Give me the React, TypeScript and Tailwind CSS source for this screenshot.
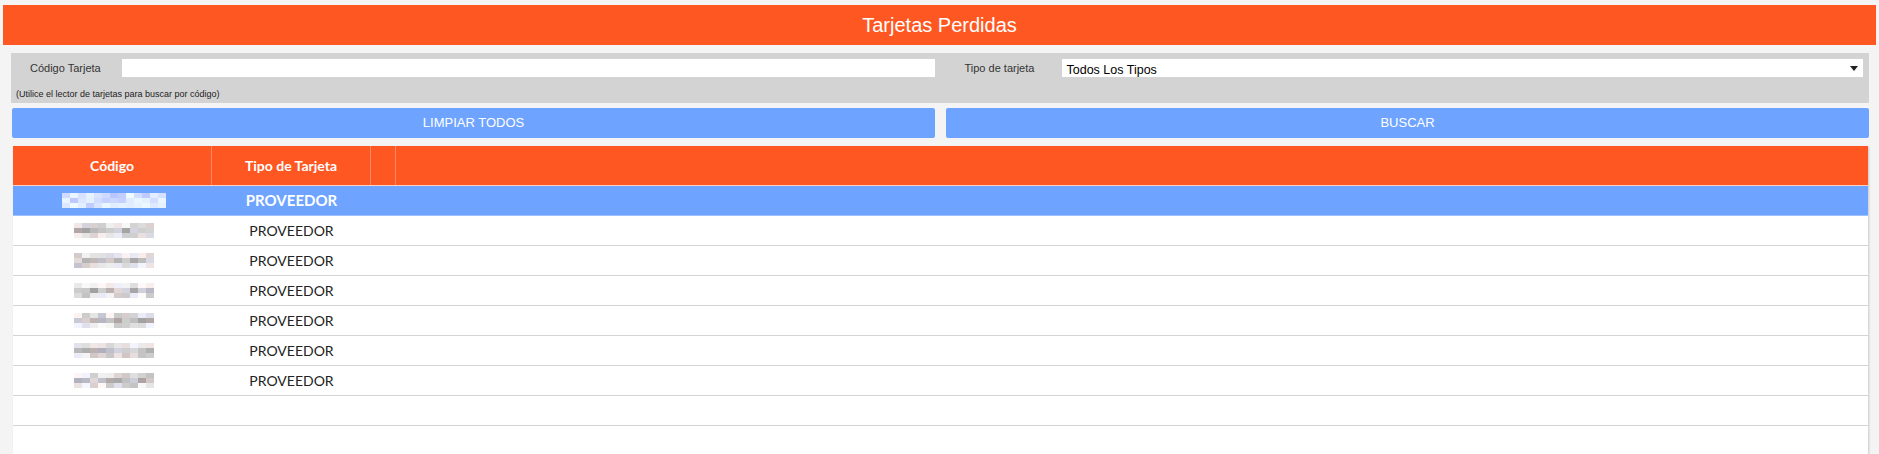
import React from "react";

const ORANGE = "bg-[#ff5722]";

function rand(seed: number) {
  let s = seed;
  return () => {
    s = (s * 9301 + 49297) % 233280;
    return s / 233280;
  };
}

function Mosaic({ seed, selected, width }: { seed: number; selected?: boolean; width: number }) {
  const r = rand(seed);
  const cols = Math.round(width / 8);
  const rows = 3;
  const rects: React.ReactNode[] = [];
  for (let y = 0; y < rows; y++) {
    for (let x = 0; x < cols; x++) {
      const v = r();
      let fill: string;
      if (selected) {
        const l = Math.round(200 + v * 55);
        fill = `rgb(${Math.min(255, l - 15)},${Math.min(255, l - 3)},255)`;
      } else {
        const base = y === 1 ? 160 : 195;
        const l = Math.round(base + v * (y === 1 ? 60 : 55));
        const tint = r();
        const rr = l + (tint > 0.7 ? 10 : 0);
        const bb = l + (tint < 0.3 ? 12 : 0);
        fill = `rgb(${Math.min(255, rr)},${Math.min(255, l)},${Math.min(255, bb)})`;
      }
      rects.push(<rect key={`${x}-${y}`} x={x * 8} y={y * 5} width={8} height={5} fill={fill} />);
    }
  }
  return (
    <svg width={cols * 8} height={15} viewBox={`0 0 ${cols * 8} 15`} className="block">
      {rects}
    </svg>
  );
}

export default function App() {
  const rows = [11, 23, 37, 41, 59, 67];
  return (
    <div className="w-[1879px] h-[454px] overflow-hidden bg-[#f4f4f4] font-['Liberation_Sans',Arial,sans-serif]">
      <div className={`mx-[3px] mt-[5px] h-[40px] ${ORANGE} flex items-center justify-center text-white text-[20px]`}>
        Tarjetas Perdidas
      </div>
      <div className="ml-[11px] mr-[10px]">
        <div className="mt-[8px] h-[50px] bg-[#d3d3d3] grid grid-cols-2 gap-[11px] relative">
          <div className="flex items-start pt-[6px]">
            <span className="pl-[19px] w-[111px] text-[11px] text-[#333] leading-[18px]">Código Tarjeta</span>
            <div className="flex-1 h-[18px] bg-white" />
          </div>
          <div className="flex items-start pt-[6px] pr-[6px]">
            <span className="pl-[19px] w-[116px] text-[11px] text-[#333] leading-[18px]">Tipo de tarjeta</span>
            <div className="flex-1 h-[18px] bg-white flex items-center justify-between pl-[5px] pr-[5px]">
              <span className="text-[12.5px] text-black leading-[18px] pt-[3px]">Todos Los Tipos</span>
              <svg width="8" height="5" viewBox="0 0 8 5" className="block">
                <path d="M0 0 H8 L4 5 Z" fill="#222" />
              </svg>
            </div>
          </div>
          <div className="absolute left-[5px] top-[35px] text-[9px] text-[#222] leading-[12px]">
            (Utilice el lector de tarjetas para buscar por código)
          </div>
        </div>
        <div className="mt-[5px] grid grid-cols-2 gap-[11px] pl-[1px]">
          <div className="h-[30px] rounded-[2px] bg-[#6ea4ff] flex items-center justify-center text-white text-[13px]">
            LIMPIAR TODOS
          </div>
          <div className="h-[30px] rounded-[2px] bg-[#6ea4ff] flex items-center justify-center text-white text-[13px]">
            BUSCAR
          </div>
        </div>
        <div className="mt-[8px] ml-[2px] mr-[1px] bg-white h-[320px] shadow-[1px_1px_2px_rgba(0,0,0,0.18)] font-['Lato',sans-serif]">
          <div className={`h-[40px] ${ORANGE} border-b border-[#ffd0bf] flex text-white font-bold text-[14px]`}>
            <div className="w-[199px] flex items-center justify-center border-r border-[#ff8a65]">Código</div>
            <div className="w-[159px] flex items-center justify-center border-r border-[#ff8a65]">Tipo de Tarjeta</div>
            <div className="w-[25px] border-r border-[#ff8a65]" />
            <div className="flex-1" />
          </div>
          <div className="h-[30px] bg-[#6ea4ff] border-b border-[#9fc2ff] flex items-center">
            <div className="w-[199px] flex justify-center pl-[3px]">
              <Mosaic seed={5} selected width={100} />
            </div>
            <div className="w-[159px] flex justify-center text-white font-bold text-[15px]">PROVEEDOR</div>
          </div>
          {rows.map((s) => (
            <div key={s} className="h-[30px] border-b border-[#d4d4d4] flex items-center">
              <div className="w-[199px] flex justify-center pl-[2px]">
                <Mosaic seed={s} width={80} />
              </div>
              <div className="w-[159px] flex justify-center text-[#222] text-[14px]">PROVEEDOR</div>
            </div>
          ))}
          <div className="h-[30px] border-b border-[#d4d4d4]" />
        </div>
      </div>
    </div>
  );
}
